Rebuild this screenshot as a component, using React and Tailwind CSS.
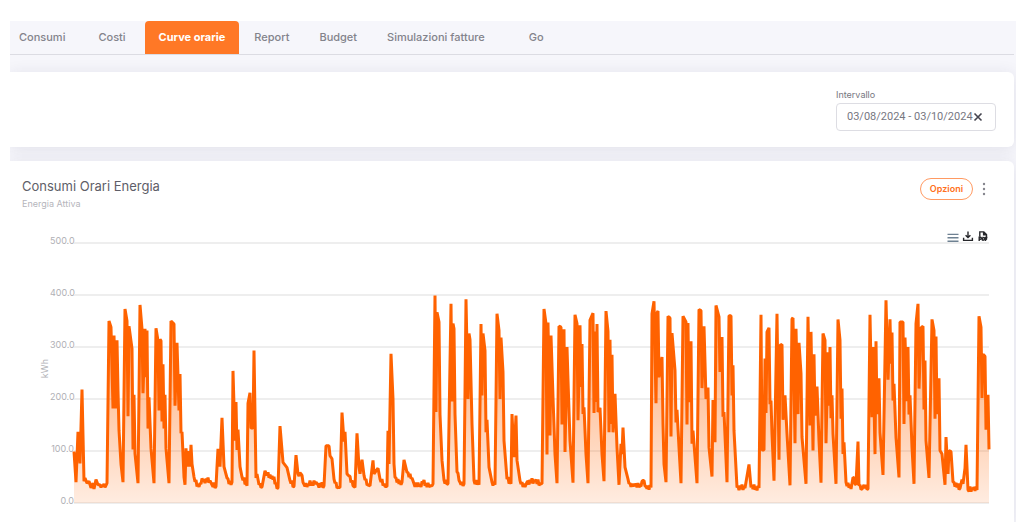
import { useState } from 'react';

const TABS = ['Consumi', 'Costi', 'Curve orarie', 'Report', 'Budget', 'Simulazioni fatture', 'Go'];

const TICKS = ['500.0', '400.0', '300.0', '200.0', '100.0', '0.0'];

const PLOT_WIDTH = 915;
const PLOT_HEIGHT = 260;
const MAX_KWH = 500;

// [position, kWh]
const READINGS = [
  [0, 99], [2, 40], [4, 137], [6, 76], [8, 218], [10, 42], [11, 48], [13, 38], [15, 42], [17, 29], [19, 38], [20, 27],
  [22, 45], [24, 35], [26, 35], [29, 32], [32, 34], [33, 38], [35, 350], [37, 338], [39, 182], [40, 322], [42, 182],
  [43, 313], [44, 216], [45, 140], [47, 75], [49, 40], [51, 373], [53, 350], [54, 167], [55, 340], [58, 297], [59, 103],
  [60, 208], [61, 95], [64, 38], [66, 381], [68, 335], [69, 211], [71, 335], [72, 242], [73, 332], [74, 143], [75, 203],
  [77, 105], [80, 38], [82, 336], [84, 312], [85, 178], [86, 315], [87, 312], [88, 157], [89, 267], [90, 143], [91, 208],
  [92, 105], [95, 38], [97, 350], [100, 344], [101, 187], [103, 308], [105, 178], [106, 248], [107, 134], [108, 137],
  [110, 50], [111, 35], [112, 105], [113, 70], [115, 100], [116, 70], [117, 112], [118, 75], [120, 50], [123, 32],
  [126, 38], [129, 43], [136, 43], [138, 35], [142, 32], [143, 70], [144, 104], [146, 70], [148, 164], [150, 70],
  [153, 48], [157, 35], [158, 40], [159, 254], [161, 120], [162, 194], [163, 102], [164, 141], [166, 70], [168, 50],
  [173, 33], [174, 192], [176, 212], [177, 144], [179, 144], [180, 293], [182, 48], [183, 56], [185, 35], [188, 31],
  [191, 62], [193, 53], [198, 52], [204, 29], [206, 148], [209, 78], [213, 68], [216, 43], [220, 32], [222, 92],
  [224, 56], [227, 56], [230, 36], [234, 36], [242, 40], [244, 35], [250, 33], [252, 110], [255, 110], [256, 91],
  [258, 85], [260, 46], [264, 30], [266, 30], [268, 174], [270, 118], [271, 137], [273, 56], [275, 52], [279, 33],
  [281, 30], [283, 134], [285, 69], [286, 56], [288, 83], [290, 53], [294, 35], [296, 33], [299, 82], [300, 56],
  [304, 67], [306, 46], [311, 32], [313, 32], [314, 139], [315, 75], [317, 287], [319, 200], [320, 75], [321, 49],
  [327, 35], [328, 40], [330, 83], [333, 59], [338, 48], [340, 37], [345, 32], [349, 39], [356, 33], [358, 33],
  [359, 37], [361, 399], [362, 175], [363, 367], [365, 348], [366, 170], [368, 82], [370, 44], [374, 37], [377, 383],
  [378, 195], [379, 345], [380, 335], [381, 171], [383, 60], [386, 40], [390, 37], [392, 392], [394, 200], [395, 326],
  [396, 314], [398, 152], [400, 43], [405, 35], [407, 344], [408, 207], [409, 326], [411, 293], [412, 136], [413, 160],
  [415, 69], [418, 40], [421, 35], [423, 364], [425, 332], [426, 200], [427, 318], [429, 252], [430, 120], [433, 46],
  [437, 37], [438, 171], [440, 88], [442, 168], [443, 82], [446, 43], [451, 31], [453, 40], [461, 42], [466, 37],
  [468, 37], [470, 373], [472, 345], [473, 93], [474, 347], [476, 130], [477, 322], [479, 203], [481, 94], [483, 38],
  [485, 340], [487, 338], [488, 151], [490, 334], [491, 98], [493, 300], [494, 236], [496, 120], [499, 39], [501, 362],
  [503, 345], [504, 159], [506, 342], [507, 223], [508, 306], [509, 171], [510, 184], [512, 94], [514, 38], [516, 352],
  [519, 365], [520, 173], [521, 330], [522, 194], [523, 344], [524, 175], [526, 183], [528, 94], [530, 42], [532, 369],
  [534, 330], [535, 136], [536, 314], [537, 152], [538, 285], [539, 136], [541, 210], [543, 107], [545, 35], [547, 114],
  [548, 94], [549, 145], [551, 69], [554, 46], [557, 31], [560, 37], [566, 33], [569, 43], [572, 32], [577, 30],
  [578, 364], [580, 388], [582, 192], [583, 366], [584, 369], [585, 242], [588, 281], [589, 152], [590, 75], [592, 40],
  [594, 359], [596, 356], [597, 128], [598, 327], [601, 255], [602, 155], [603, 179], [605, 107], [607, 38], [609, 359],
  [612, 348], [613, 151], [614, 346], [615, 194], [617, 311], [618, 114], [619, 139], [623, 38], [625, 372], [627, 370],
  [628, 221], [630, 340], [632, 200], [634, 222], [635, 107], [638, 51], [639, 198], [641, 117], [642, 380], [645, 358],
  [646, 252], [648, 319], [649, 166], [650, 175], [653, 40], [655, 360], [657, 360], [658, 207], [659, 265], [660, 139],
  [663, 30], [671, 29], [675, 74], [677, 30], [685, 29], [687, 362], [688, 102], [690, 102], [691, 278], [692, 173],
  [693, 329], [695, 337], [696, 190], [697, 197], [698, 133], [700, 43], [703, 364], [705, 83], [706, 303], [708, 305],
  [709, 160], [711, 207], [713, 133], [716, 34], [718, 354], [719, 356], [721, 115], [722, 335], [724, 171], [725, 308],
  [727, 249], [728, 127], [732, 37], [734, 358], [736, 149], [737, 329], [739, 101], [740, 286], [741, 168], [743, 224],
  [745, 120], [747, 39], [749, 326], [751, 313], [752, 115], [754, 290], [755, 187], [756, 300], [757, 163], [758, 207],
  [759, 133], [762, 37], [764, 353], [766, 313], [767, 162], [768, 220], [769, 94], [770, 117], [772, 40], [777, 27],
  [779, 49], [782, 35], [784, 118], [785, 33], [788, 27], [790, 35], [794, 27], [796, 362], [798, 165], [799, 300],
  [801, 94], [802, 311], [803, 171], [805, 240], [806, 136], [809, 54], [812, 390], [814, 237], [816, 353], [817, 268],
  [818, 328], [819, 197], [820, 229], [822, 126], [825, 49], [826, 348], [829, 348], [830, 152], [831, 318], [833, 196],
  [834, 300], [835, 170], [836, 207], [838, 107], [840, 37], [842, 345], [844, 383], [845, 220], [847, 337], [849, 340],
  [850, 180], [851, 274], [852, 120], [855, 48], [858, 353], [860, 332], [861, 162], [862, 320], [863, 171], [865, 240],
  [866, 101], [868, 94], [871, 35], [872, 127], [874, 56], [875, 101], [877, 99], [879, 40], [886, 28], [888, 45],
  [889, 37], [891, 67], [892, 112], [894, 25], [899, 27], [903, 25], [905, 359], [907, 338], [908, 202], [909, 286],
  [911, 282], [912, 141], [914, 208], [915, 103],
];

// Small swings of the base load between two distant low readings
const RIPPLE = [4, -3, 6, -4, 2, -5];

const withRipple = (readings) =>
  readings.flatMap(([x, kwh], i) => {
    const next = readings[i + 1];
    if (!next || kwh > 60 || next[1] > 60 || next[0] - x < 3) return [[x, kwh]];
    const points = [[x, kwh]];
    for (let step = x + 1; step < next[0]; step += 1) {
      const base = kwh + ((next[1] - kwh) * (step - x)) / (next[0] - x);
      points.push([step, base + RIPPLE[step % RIPPLE.length]]);
    }
    return points;
  });

const toY = (kwh) => PLOT_HEIGHT - (kwh / MAX_KWH) * PLOT_HEIGHT;

const line = withRipple(READINGS)
  .map(([x, kwh]) => `${x},${toY(kwh).toFixed(1)}`)
  .join(' L');

const LoadChart = () => (
  <svg
    className="block w-full h-[260px] overflow-visible"
    viewBox={`0 0 ${PLOT_WIDTH} ${PLOT_HEIGHT}`}
    preserveAspectRatio="none"
    role="img"
    aria-label="Consumi Orari Energia"
  >
    <defs>
      <linearGradient id="load-fill" x1="0" y1="0" x2="0" y2="1">
        <stop offset="0" stopColor="#ff6200" stopOpacity="0.65" />
        <stop offset="0.5" stopColor="#ff6200" stopOpacity="0.36" />
        <stop offset="1" stopColor="#ff6200" stopOpacity="0.12" />
      </linearGradient>
    </defs>
    {TICKS.map((tick, i) => (
      <line
        key={tick}
        x1="0"
        x2={PLOT_WIDTH}
        y1={i * 52}
        y2={i * 52}
        stroke="#eeeeee"
        strokeWidth="2"
        vectorEffect="non-scaling-stroke"
      />
    ))}
    <path d={`M0,${PLOT_HEIGHT} L${line} L${PLOT_WIDTH},${PLOT_HEIGHT} Z`} fill="url(#load-fill)" />
    <path
      d={`M${line}`}
      fill="none"
      stroke="#ff6200"
      strokeWidth="3"
      strokeLinejoin="bevel"
      vectorEffect="non-scaling-stroke"
    />
  </svg>
);

const ChartToolbar = () => (
  <div className="flex justify-end gap-[3px] h-3">
    <button type="button" aria-label="Menu" className="w-3 h-3">
      <svg viewBox="0 0 12 12" className="w-3 h-3" stroke="#6e8192" strokeWidth="1.4">
        <path d="M0.5 3.4h11M0.5 6.8h11M0.5 10.2h11" />
      </svg>
    </button>
    <button type="button" aria-label="Scarica" className="w-3 h-3">
      <svg viewBox="0 0 12 12" className="w-3 h-3" fill="none" stroke="#26272b" strokeWidth="1.4">
        <path d="M6 0.4v6M3.6 4.2L6 6.6l2.4-2.4M1.6 6.8v2.6h8.8V6.8" />
      </svg>
    </button>
    <button type="button" aria-label="Esporta PDF" className="w-3 h-3">
      <svg viewBox="0 0 12 12" className="w-3 h-3" fill="none" stroke="#26272b" strokeWidth="1.4">
        <path d="M2.8 5.8V0.9h4l2.7 2.7v5M6.6 0.9v2.9h2.9" />
        <path d="M2.2 10V6.3h1.2a1 1 0 010 2H2.2M5.4 6.4v3M5.4 6.4h.7a1.4 1.4 0 010 2.9h-.7M8.5 10V6.4h1.8M8.5 8.1h1.5" />
      </svg>
    </button>
  </div>
);

const App = () => {
  const [activeTab, setActiveTab] = useState('Curve orarie');
  const [range, setRange] = useState('03/08/2024 - 03/10/2024');

  return (
    <div className="pt-[21px] pl-[10px] pr-2 bg-white font-['Inter',sans-serif]">
      <div className="bg-[#f6f6fb] pr-[2px] overflow-hidden">
        <nav className="flex h-[34px] border-b border-[#dcdce3]">
          {TABS.map((tab) => (
            <button
              key={tab}
              type="button"
              onClick={() => setActiveTab(tab)}
              className={`pb-[2px] text-[11px] leading-4 whitespace-nowrap first:pl-[9px] first:pr-[18px] last:ml-[14px] ${
                tab === activeTab
                  ? 'ml-1 px-[14px] font-bold text-white bg-[#ff7826] rounded-t'
                  : 'px-[15px] font-medium text-[#83838b]'
              }`}
            >
              {tab}
            </button>
          ))}
        </nav>

        <section className="flex justify-end mt-[17px] h-[75px] pt-[17px] pr-[18px] bg-white rounded-r-md shadow-[0_2px_16px_rgba(40,40,80,0.10)]">
          <div className="w-[160px]">
            <label htmlFor="range" className="block text-[9px] leading-3 text-[#77777f]">
              Intervallo
            </label>
            <div className="flex items-center h-7 mt-[2px] pl-[10px] border border-[#dddde3] rounded">
              <input
                id="range"
                type="text"
                value={range}
                onChange={(e) => setRange(e.target.value)}
                className="w-[126px] font-['Roboto',sans-serif] text-[11px] leading-4 text-[#77777f] outline-none"
              />
              <button type="button" aria-label="Cancella" onClick={() => setRange('')}>
                <svg viewBox="0 0 10 10" className="block w-[10px] h-[10px]" stroke="#44444f" strokeWidth="1.6">
                  <path d="M1.5 1.5l7 7M8.5 1.5l-7 7" />
                </svg>
              </button>
            </div>
          </div>
        </section>

        <section className="mt-[14px] pb-[19px] bg-white rounded-tr-md shadow-[0_2px_16px_rgba(40,40,80,0.10)]">
          <div className="flex justify-between pt-[15px] pl-3 pr-[26px]">
            <div>
              <h1 className="text-[13px] leading-5 text-[#5e5e68]">Consumi Orari Energia</h1>
              <p className="text-[9px] leading-4 text-[#b5b5bb]">Energia Attiva</p>
            </div>
            <div className="flex items-center gap-[7px] mt-[2px] h-[22px]">
              <button
                type="button"
                className="h-[22px] px-[9px] text-[9px] font-semibold text-[#ff7020] border border-[#ff9a62] rounded-full"
              >
                Opzioni
              </button>
              <button type="button" aria-label="Altro" className="w-2">
                <svg viewBox="0 0 8 14" className="block w-2 h-[14px]" fill="#85858d">
                  <circle cx="4" cy="2" r="1.2" />
                  <circle cx="4" cy="7" r="1.2" />
                  <circle cx="4" cy="12" r="1.2" />
                </svg>
              </button>
            </div>
          </div>

          <div className="flex mt-[19px] pl-[30px] pr-[25px]">
            <div className="flex items-center w-[10px]">
              <span className="text-[9px] leading-[10px] text-[#b0b0b5] [writing-mode:vertical-rl] rotate-180">kWh</span>
            </div>
            <div className="flex flex-col justify-between w-6 mt-[5px] h-[270px] text-right text-[9px] leading-[10px] text-[#b0b0b5]">
              {TICKS.map((tick) => (
                <span key={tick}>{tick}</span>
              ))}
            </div>
            <div className="flex-1 min-w-0">
              <ChartToolbar />
              <LoadChart />
            </div>
          </div>
        </section>
      </div>
    </div>
  );
};

export default App;
